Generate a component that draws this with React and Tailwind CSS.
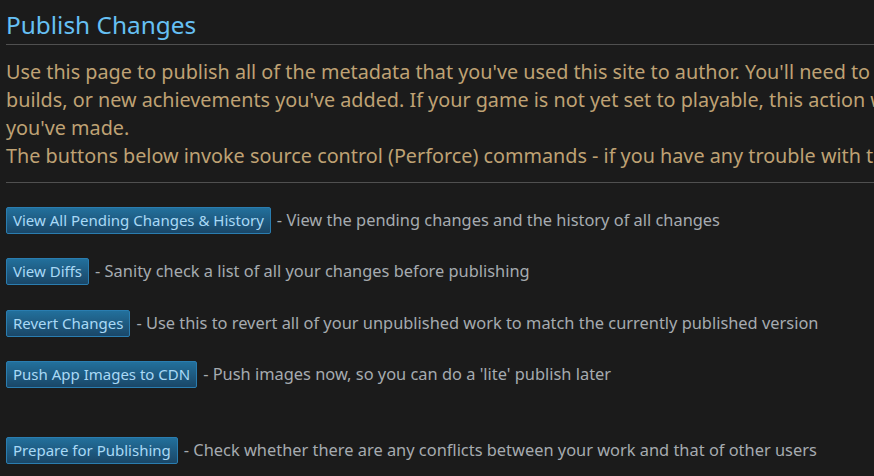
const rows = [
  { label: "View All Pending Changes & History", desc: "View the pending changes and the history of all changes", mt: "mt-6" },
  { label: "View Diffs", desc: "Sanity check a list of all your changes before publishing", mt: "mt-6" },
  { label: "Revert Changes", desc: "Use this to revert all of your unpublished work to match the currently published version", mt: "mt-[25px]" },
  { label: "Push App Images to CDN", desc: "Push images now, so you can do a 'lite' publish later", mt: "mt-6" },
  { label: "Prepare for Publishing", desc: "Check whether there are any conflicts between your work and that of other users", mt: "mt-[49px]" },
];

function Row({ label, desc, mt }) {
  return (
    <div className={`${mt} flex items-center whitespace-nowrap`}>
      <button className="h-[27px] px-[6px] rounded-[2px] border border-[#2a7db0] bg-gradient-to-b from-[#22709c] to-[#1a4768] text-[#a9d9f6] text-[15px] leading-[25px]">
        {label}
      </button>
      <span className="ml-[6px] text-[16.4px] text-[#a6abb0]">- {desc}</span>
    </div>
  );
}

export default function App() {
  return (
    <div className="w-[874px] h-[476px] overflow-hidden bg-[#1b1b1b] font-['Noto_Sans',sans-serif]">
      <div className="w-[1400px] pl-[6px] pt-[10px]">
        <h1 className="text-[24.4px] leading-[30px] text-[#66c0f4] font-normal">Publish Changes</h1>
        <div className="mt-[4px] h-px bg-[#505050]" />
        <div className="mt-[13px] text-[19.8px] leading-[28px] text-[#bfa274] whitespace-nowrap">
          <div>Use this page to publish all of the metadata that you've used this site to author. You'll need to publish in order to make available any new depots, new</div>
          <div>builds, or new achievements you've added. If your game is not yet set to playable, this action will only update the information visible to users with access to</div>
          <div>you've made.</div>
          <div>The buttons below invoke source control (Perforce) commands - if you have any trouble with these, please contact us.</div>
        </div>
        <div className="mt-[12px] h-px bg-[#505050]" />
        <div className="flex flex-col">
          {rows.map((r) => (
            <Row key={r.label} {...r} />
          ))}
        </div>
      </div>
    </div>
  );
}
